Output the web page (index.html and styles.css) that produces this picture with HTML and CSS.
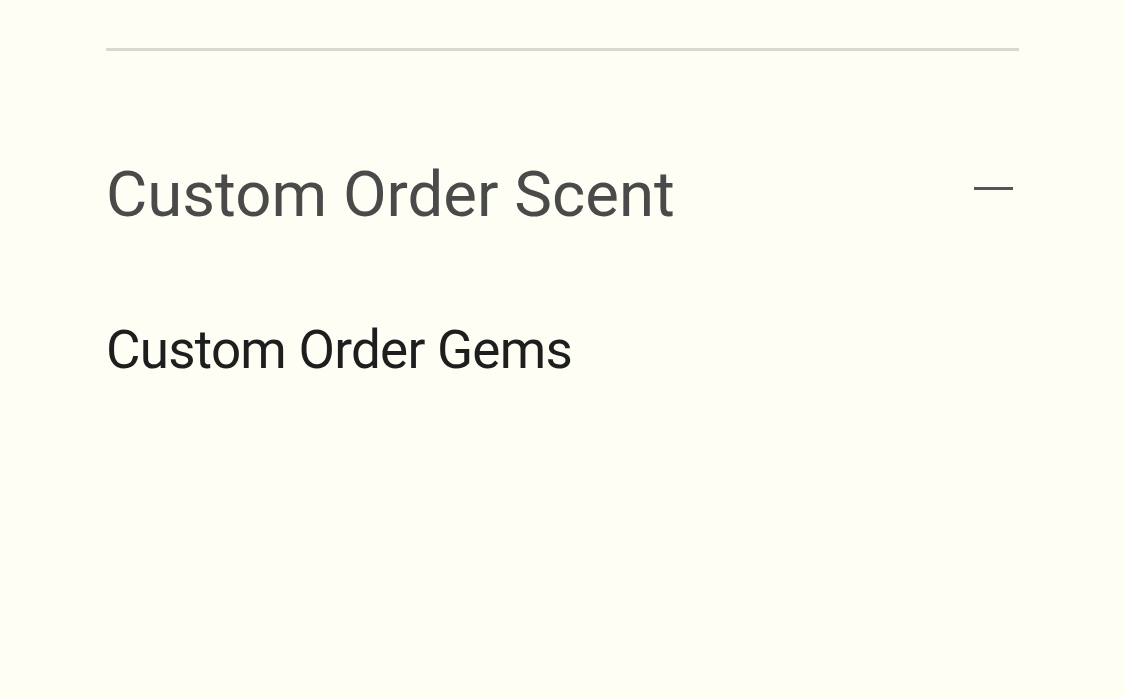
FILE: index.html
```html
<!DOCTYPE html>
<html>
<head>
<meta charset="utf-8">
<link rel="stylesheet" href="styles.css">
</head>
<body>
<div class="wrap">
  <hr class="divider">
  <div class="accordion-head">
    <h2 class="acc-title">Custom Order Scent</h2>
    <span class="acc-minus"></span>
  </div>
  <div class="acc-body">
    <p class="acc-item">Custom Order Gems</p>
  </div>
</div>
</body>
</html>
```
FILE: styles.css
```css
html, body {
  margin: 0;
  padding: 0;
  background: #fefef5;
}
body {
  font-family: Roboto, "Liberation Sans", sans-serif;
  width: 1125px;
  height: 698px;
  overflow: hidden;
}
.wrap {
  padding: 48px 106px 0 106px;
}
.divider {
  margin: 0;
  border: 0;
  height: 3px;
  background: #d9d9d4;
}
.accordion-head {
  display: flex;
  align-items: center;
  justify-content: space-between;
  margin-top: 101px;
}
.acc-title {
  margin: 0;
  font-weight: 400;
  font-size: 63.5px;
  line-height: 86px;
  color: #4a4a4a;
}
.acc-minus {
  width: 39px;
  height: 3px;
  background: #555;
  margin-right: 6px;
  margin-top: -14px;
}
.acc-body {
  margin-top: 77px;
}
.acc-item {
  margin: 0;
  font-size: 53px;
  line-height: 70px;
  letter-spacing: -0.75px;
  color: #1e1e1e;
}
```
